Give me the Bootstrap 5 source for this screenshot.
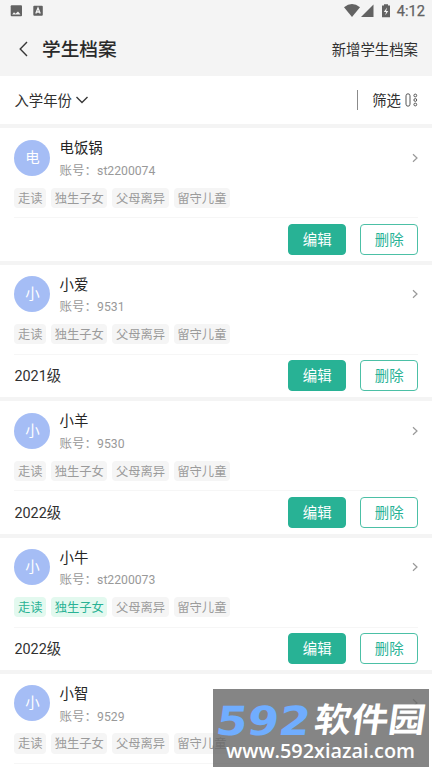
<!DOCTYPE html>
<html lang="zh-CN">
<head>
<meta charset="utf-8">
<meta name="viewport" content="width=device-width, initial-scale=1">
<title>学生档案</title>
<link href="https://cdn.jsdelivr.net/npm/bootstrap@5.3.0/dist/css/bootstrap.min.css" rel="stylesheet">
<style>
body{font-family:Roboto,"Noto Sans CJK SC",sans-serif;font-size:14.4px;line-height:20px;color:#303030;background:#fff;height:768px}
svg{display:block;flex:none}
.top-area{background:#f4f4f4;height:76px}
.status{height:22px;padding:0 7px 0 10px;color:#626262}
.clock{font-size:14.6px;font-weight:400;-webkit-text-stroke:.25px #626262;margin-left:7px}
.title-row{height:54px;padding:0 14px 0 19px}
.title{font-size:18.7px;font-weight:500;line-height:24px;margin:0 0 0 14px;padding-top:1px;color:#292929}
.add-link{padding-top:3px}
.filter-row{height:48.4px;padding:0 14px 0 14.4px}
.filter-text{padding-top:3px}
.divider-v{width:1.4px;height:20px;background:#8b8b8b;margin-right:14px}
.student{height:136.4px;border-top:4.4px solid #f4f4f4;padding:11.4px 14px 0 14.4px}
.avatar{width:36px;height:36px;padding-top:2px;background:#a5bdf5;color:#fff;font-size:14.4px}
.person{margin-left:9.2px;height:42px}
.person-name{line-height:18px;padding-top:.6px;color:#252525}
.account{font-size:12.5px;line-height:18px;margin-top:3.6px;color:#999}
.account-id{font-size:12.2px}
.chev{margin:12px -1px 0 0}
.tags{gap:4.9px;margin-top:6px;height:20.3px}
.tag{font-size:12.3px;line-height:18.3px;height:20.3px;padding:2px 3.6px 0;border-radius:4px;background:#f5f5f5;color:#9b9b9b}
.tag-on{background:#e3f9ef;color:#29b294}
.foot{border-top:1px solid #f6f6f6;margin-top:9.4px;height:42.6px;gap:14.4px}
.year{padding-top:3px}
.foot .btn{width:57.6px;height:31px;padding:2px 0 0;font-size:14.4px;line-height:27px;border-radius:4px}
.btn-edit,.btn-edit:hover{background:#28b295;border-color:#28b295;color:#fff}
.btn-del,.btn-del:hover{background:#fff;border-color:#4cc0a6;color:#28b295}
.watermark{left:213px;top:689px;width:216px;height:78px;background:rgba(103,103,103,.8)}
</style>
</head>
<body class="position-relative overflow-hidden">
<header class="top-area">
  <div class="status d-flex align-items-center">
    <svg width="34" height="12" viewBox="0 0 34 12"><rect x=".7" y=".3" width="11.300" height="11" rx="1" fill="#626262"/><path d="M2.200 9.500L4 7.300l1.500 1.400L8 6.500l2.500 3z" fill="#f4f4f4"/><rect x="23.300" y=".8" width="9.500" height="10" rx="1" fill="#626262"/><path d="M25.800 8.600L28 3l2.200 5.600M26.700 7h2.600" fill="none" stroke="#f4f4f4" stroke-width="1.300"/></svg>
    <svg class="ms-auto" width="46" height="14" viewBox="0 0 46 14"><path d="M0 3.200Q8-3 16 3.200L8 13z" fill="#626262"/><path d="M17 13L29.500.6V13z" fill="#626262"/><path d="M38 1.600h2V.3h4v1.300h2V13.300h-8z" fill="#626262"/><path d="M43 3.500L39.800 8H42l-.7 3.300L44.300 7H42.200z" fill="#f4f4f4"/></svg>
    <span class="clock">4:12</span>
  </div>
  <div class="title-row d-flex align-items-center">
    <svg width="9" height="16" viewBox="0 0 9 16" fill="none" stroke="#383838" stroke-width="1.400"><path d="M8 1L1.200 8 8 15"/></svg>
    <h1 class="title">学生档案</h1>
    <span class="add-link ms-auto">新增学生档案</span>
  </div>
</header>
<div class="filter-row d-flex align-items-center">
  <span class="filter-text">入学年份</span>
  <svg class="ms-1" width="13" height="8" viewBox="0 0 13 8" fill="none" stroke="#383838" stroke-width="1.400"><path d="M.5 1l5.500 5.500L11.500 1"/></svg>
  <span class="divider-v ms-auto"></span>
  <span class="filter-text">筛选</span>
  <svg class="ms-1" width="13" height="14" viewBox="0 0 13 14" fill="none" stroke="#555"><rect x="1" y=".8" width="4" height="12.400" rx="2"/><circle cx="10.300" cy="2.500" r="1.400"/><circle cx="10.300" cy="7" r="1.400"/><circle cx="10.300" cy="11.500" r="1.400"/></svg>
</div>
<main id="students"></main>
<div class="watermark position-absolute">
  <svg width="216" height="78" viewBox="0 0 216 78">
    <g transform="skewX(-8)"><text x="8" y="46" textLength="94" lengthAdjust="spacingAndGlyphs" font-family="DejaVu Sans" font-weight="700" font-size="40" fill="#70adff">592</text>
    <text x="106" y="43" textLength="111" lengthAdjust="spacingAndGlyphs" font-family="Noto Sans CJK SC" font-weight="700" font-size="34" fill="#fff">软件园</text></g>
    <text x="13" y="69" textLength="189" lengthAdjust="spacingAndGlyphs" font-family="Open Sans" font-weight="600" font-size="20" fill="#fff">www.592xiazai.com</text>
  </svg>
</div>
<script>
const students = [
  ['电饭锅','st2200074',''],
  ['小爱','9531','2021级'],
  ['小羊','9530','2022级'],
  ['小牛','st2200073','2022级',2],
  ['小智','9529',null]
];
const actions = '<button class="btn btn-edit">编辑</button><button class="btn btn-del">删除</button>';
document.getElementById('students').innerHTML = students.map(([name,id,year,active=0]) => `
<section class="student">
  <div class="d-flex align-items-start">
    <div class="avatar rounded-circle d-flex align-items-center justify-content-center">${name[0]}</div>
    <div class="person"><div class="person-name">${name}</div><div class="account">账号：<span class="account-id">${id}</span></div></div>
    <svg class="chev ms-auto" width="8" height="12" viewBox="0 0 8 12" fill="none" stroke="#999" stroke-width="1.200"><path d="M2 2.200L6 6 2 9.800"/></svg>
  </div>
  <div class="tags d-flex">${['走读','独生子女','父母离异','留守儿童'].map((t,i)=>`<span class="tag ${i<active?'tag-on':''}">${t}</span>`).join('')}</div>
  <div class="foot d-flex align-items-center">${year === null ? '' : `<span class="year me-auto">${year}</span>${actions}`}</div>
</section>`).join('');
</script>
<script src="https://cdn.jsdelivr.net/npm/bootstrap@5.3.0/dist/js/bootstrap.bundle.min.js"></script>
</body>
</html>
